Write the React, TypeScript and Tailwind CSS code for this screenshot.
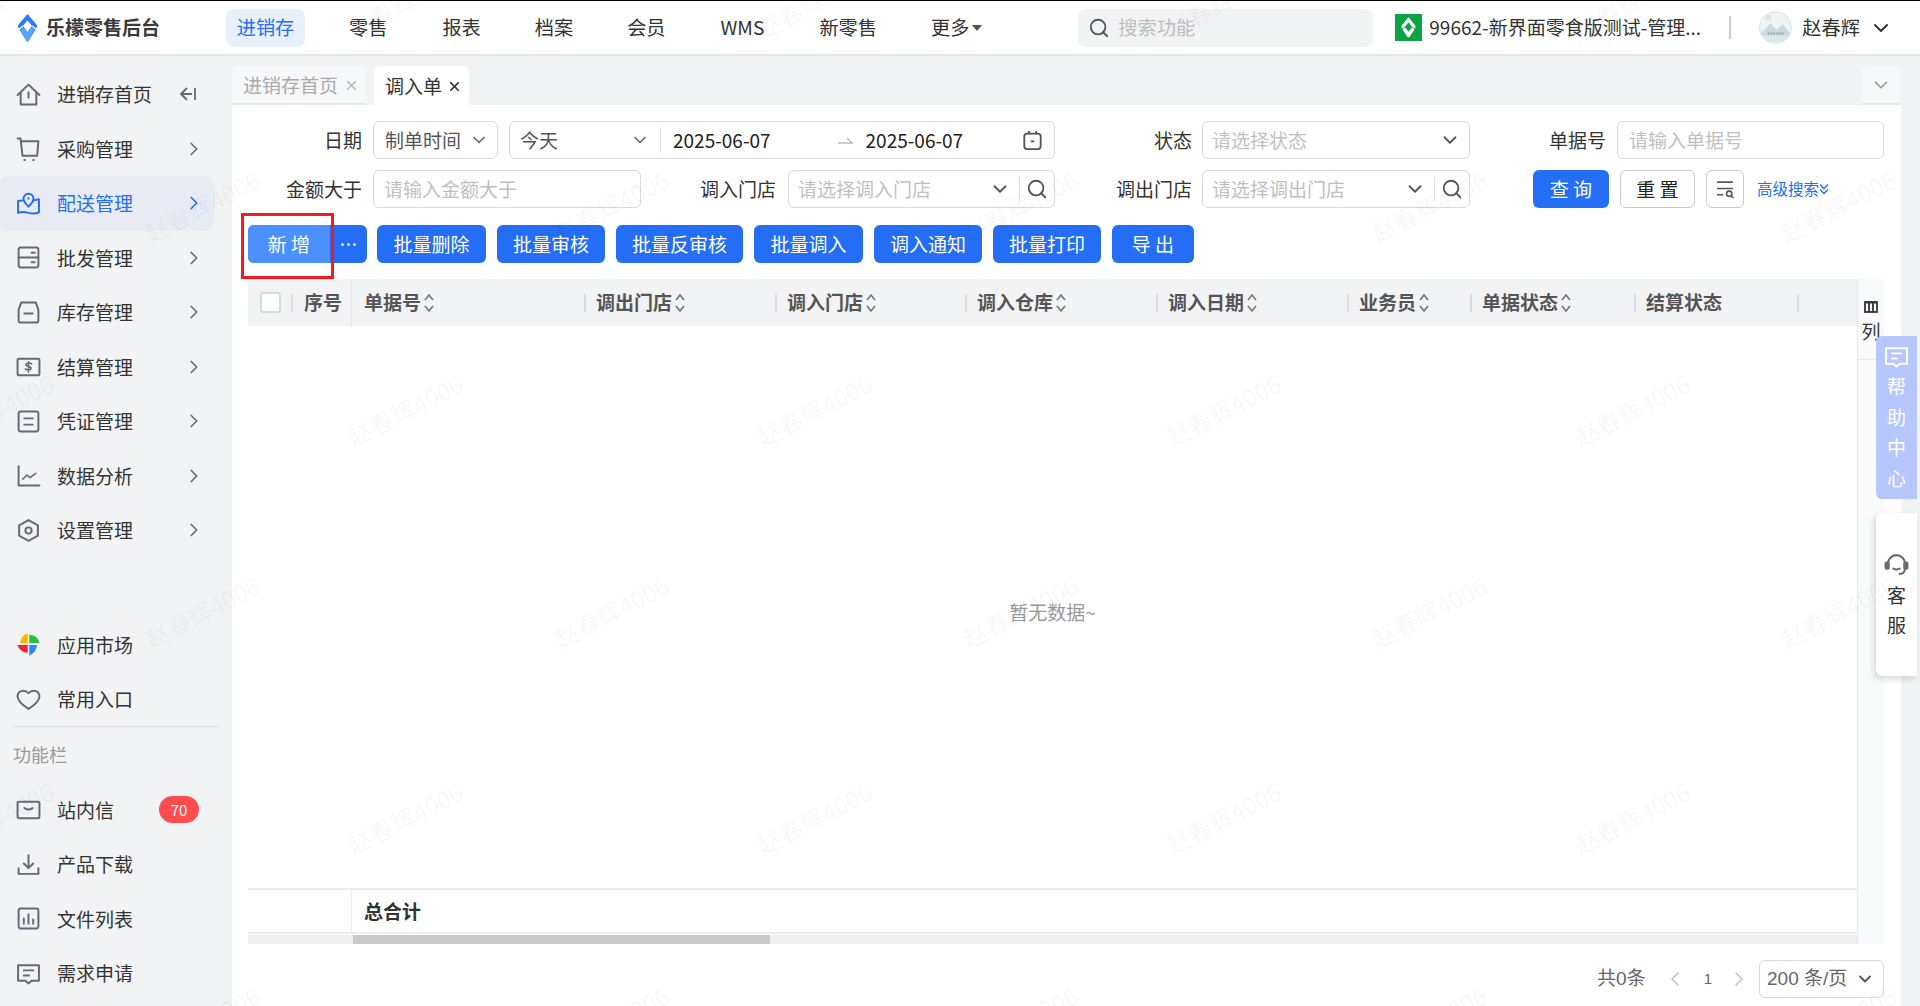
import type { ReactNode } from 'react'
import { ChevronDown, ChevronLeft, ChevronRight, Search, X } from 'lucide-react'

function Ico({ children, className = '' }: { children: ReactNode; className?: string }) {
  return (
    <svg viewBox="0 0 24 24" fill="none" stroke="currentColor" strokeWidth="1.9" strokeLinejoin="round" strokeLinecap="round" className={`h-[25px] w-[25px] shrink-0 ${className}`}>
      {children}
    </svg>
  )
}

const icons: Record<string, ReactNode> = {
  home: <><path d="M1.5 12.5 12 2.5l10.5 10" /><path d="M4.5 10.500V21.500h15V10.500" /><path d="M12 10v5" /></>,
  cart: <><path d="M1.500 2.500h2.800l2 16.500h14l1.200-14H5" /><path d="M8 23h.5M16.500 23h.5" /></>,
  map: <><path d="M7 9 2 9.500V21c3-1.200 6-1 10 0s7 1 10-.5V8l-5 1" /><path d="M12 15c-3-3-4.800-5-4.800-7.500a4.800 4.800 0 0 1 9.600 0C16.800 10 15 12 12 15Z" /><path d="M12 7v.500" /></>,
  server: <><rect x="2.500" y="2.500" width="19" height="19" rx="2" /><path d="M2.500 12h19M15 7.500h3M15 16.500h3" /></>,
  box: <><path d="M5 2.500h14l2.500 7V20a1.500 1.500 0 0 1-1.500 1.500H4A1.500 1.500 0 0 1 2.500 20V9.500Z" /><path d="M8 13h8" /></>,
  money: <><rect x="1.500" y="4.500" width="21" height="16" rx="1" /><path d="M15 9.500c-1-1-5-1.500-5.500.500s5 1.500 5 3.800c-.500 2-4.500 1.700-5.500.500M12 7.500v10" strokeWidth="1.500" /></>,
  doc: <><rect x="2.500" y="2.500" width="19" height="19" rx="2" /><path d="M8 9h8M8 15h8" /></>,
  chart: <><path d="M2.500 3v18.500h20" /><path d="M6.500 15.500l4-4 3 2.500 5.500-4" strokeWidth="1.500" /></>,
  hex: <><path d="M12 2 21 7v10l-9 5-9-5V7Z" /><circle cx="12" cy="12" r="3" /></>,
  heart: <path d="M12 21C6 17 1.500 13.500 1.500 9A5.500 5.500 0 0 1 7 3.500c2 0 3.800 1 5 2.500 1.200-1.500 3-2.500 5-2.500A5.500 5.500 0 0 1 22.500 9c0 4.500-4.500 8-10.500 12Z" />,
  mail: <><rect x="1.500" y="4.500" width="21" height="16" rx="1.500" /><path d="M8 10.500c2.500 2 5.500 2 8 0" /></>,
  download: <><path d="M12 3v12M7.500 11l4.500 4.500 4.500-4.500" /><path d="M2.500 15.500V21h19v-5.500" /></>,
  bars: <><rect x="2.500" y="2.500" width="19" height="19" rx="2" /><path d="M7.500 12v5M12 8v9M16.500 13v4" /></>,
  msg: <><path d="M2 4h20v15h-7l-3 2.500L9 19H2Z" /><path d="M7.500 9h9M7.500 14h5" /></>,
}

const apps = (
  <svg viewBox="0 0 24 24" className="h-[25px] w-[25px] shrink-0">
    <path fill="#ffb400" d="M11.300 1.500v9H4c.3-4.800 3.300-8.300 7.300-9Z" />
    <path fill="#22c43c" d="M12.700 3c4.500-.5 8.500 2.500 9.800 7.500h-9.800Z" />
    <path fill="#2b88ff" d="M12.700 12.500h7.500c-.5 5-3.500 8.500-7.500 10Z" />
    <path fill="#f5222d" d="M1.500 12.500h9.800V20c-4.500-.2-8.500-3-9.800-7.500Z" />
  </svg>
)

function SideRow({ icon, label, arrow = true, active = false, extra }: { icon: ReactNode; label: string; arrow?: boolean; active?: boolean; extra?: ReactNode }) {
  return (
    <div className={`flex h-[54.5px] items-center pl-[16px] pr-[27px] ${active ? 'text-[#246ef6]' : 'text-[#333]'}`}>
      <span className={active ? 'text-[#246ef6]' : 'text-[#666a75]'}>{icon}</span>
      <span className="ml-[16px] text-[19px]">{label}</span>
      <span className="ml-auto flex items-center">
        {extra}
        {arrow && <ChevronRight size={22} strokeWidth={1.8} className={active ? 'text-[#246ef6]' : 'text-[#666a75]'} />}
      </span>
    </div>
  )
}

function Sidebar() {
  return (
    <aside className="flex w-[232px] shrink-0 flex-col bg-[#f2f3f5] pt-[11px]">
      <SideRow
        icon={<Ico>{icons.home}</Ico>}
        label="进销存首页"
        arrow={false}
        extra={
          <svg viewBox="0 0 20 20" fill="none" stroke="#666a75" strokeWidth="1.8" className="mr-[7px] h-[20px] w-[20px]">
            <path d="M9 4 3 10l6 6M3 10h11M17 4v12" />
          </svg>
        }
      />
      <SideRow icon={<Ico>{icons.cart}</Ico>} label="采购管理" />
      <div className="mr-[17px] rounded-r-xl rounded-l-md bg-[#e8ebf4] [&>div]:pr-[10px]">
        <SideRow icon={<Ico>{icons.map}</Ico>} label="配送管理" active />
      </div>
      <SideRow icon={<Ico>{icons.server}</Ico>} label="批发管理" />
      <SideRow icon={<Ico>{icons.box}</Ico>} label="库存管理" />
      <SideRow icon={<Ico>{icons.money}</Ico>} label="结算管理" />
      <SideRow icon={<Ico>{icons.doc}</Ico>} label="凭证管理" />
      <SideRow icon={<Ico>{icons.chart}</Ico>} label="数据分析" />
      <SideRow icon={<Ico>{icons.hex}</Ico>} label="设置管理" />
      <div className="h-[60px]" />
      <SideRow icon={apps} label="应用市场" arrow={false} />
      <SideRow icon={<Ico>{icons.heart}</Ico>} label="常用入口" arrow={false} />
      <div className="mx-[13px] -mt-[1px] h-px bg-[#d9dbe0]" />
      <div className="flex h-[56px] items-center pl-[13px] text-[18px] text-[#999]">功能栏</div>
      <SideRow
        icon={<Ico>{icons.mail}</Ico>}
        label="站内信"
        arrow={false}
        extra={<span className="mr-[6px] flex h-[27px] w-[40px] items-center justify-center rounded-full bg-[#ff4d4f] text-[15px] text-white">70</span>}
      />
      <SideRow icon={<Ico>{icons.download}</Ico>} label="产品下载" arrow={false} />
      <SideRow icon={<Ico>{icons.bars}</Ico>} label="文件列表" arrow={false} />
      <SideRow icon={<Ico>{icons.msg}</Ico>} label="需求申请" arrow={false} />
    </aside>
  )
}

function Header() {
  const nav = [
    ['零售', 'ml-[44px]'],
    ['报表', 'ml-[55px]'],
    ['档案', 'ml-[54px]'],
    ['会员', 'ml-[54px]'],
    ['WMS', 'ml-[55px]'],
    ['新零售', 'ml-[55px]'],
  ]
  return (
    <header className="flex h-[56px] shrink-0 items-center border-t border-b-2 border-t-black border-b-[#e5e6e8] bg-white text-[19.2px] text-[#333]">
      <svg viewBox="0 0 20 28" className="ml-[17px] h-[28px] w-[21px] shrink-0">
        <path fill="#2f7bf6" d="M10 0 19 10.500Q20 12 19 14L11 27Q10 28.500 9 27L1 14Q0 12 1 10.500Z" />
        <path fill="#fff" d="M10 6.500 14.500 12 10 18 5.500 12Z" />
        <path stroke="#fff" strokeWidth="1.300" d="M5.500 12 1 15.500M14.500 12 19 15.500" />
        <path fill="#5aa5ff" d="M3 15.800 6 13.500 10 18.500 14 13.500 17 15.800 11 26.500Q10 27.800 9 26.500Z" />
      </svg>
      <span className="ml-[8px] text-[19px] font-bold text-[#3a3a3a]">乐檬零售后台</span>
      <span className="ml-[66px] flex h-[38px] w-[79px] items-center justify-center rounded-lg bg-[#e8effd] text-[#246ef6]">进销存</span>
      {nav.map(([t, c]) => (
        <span key={t} className={c}>{t}</span>
      ))}
      <span className="ml-[54px]">更多</span>
      <svg viewBox="0 0 12 7" className="ml-[2px] h-[6px] w-[12px]"><path fill="#555" d="M0 0h12L6 7Z" /></svg>
      <div className="ml-[95px] flex h-[38px] w-[295px] items-center rounded-lg bg-[#f2f3f5] pl-[10px] text-[#bfbfbf]">
        <Search size={22} strokeWidth={2} className="text-[#555]" />
        <span className="ml-[8px]">搜索功能</span>
      </div>
      <span className="ml-[22px] flex h-[27px] w-[27px] items-center justify-center bg-[#0aa444]">
        <svg viewBox="0 0 16 22" className="h-[21px] w-[15px]">
          <path fill="#fff" d="M8 0 15 8.500Q16 10 15 12L9 21Q8 22 7 21L1 12Q0 10 1 8.500Z" />
          <path fill="#0aa444" d="M8 5.500 12 10.500 8 15.500 4 10.500Z" />
          <path stroke="#0aa444" strokeWidth="1" d="M4 10.500 1 13M12 10.500 15 13" />
        </svg>
      </span>
      <span className="ml-[7px] w-[272px] whitespace-nowrap text-[19px]">99662-新界面零食版测试-管理...</span>
      <span className="ml-[28px] h-[23px] w-[2px] bg-[#ccc]" />
      <span className="ml-[28px] flex h-[33px] w-[33px] shrink-0 items-end justify-center overflow-hidden rounded-full border border-[#cfeaea] bg-[#eef3f6]">
        <svg viewBox="0 0 33 33" className="h-[33px] w-[33px]">
          <circle cx="9" cy="7" r="3" fill="#dbe3e8" />
          <path fill="#cbd8de" d="M0 25 11 13l7 7 6-6 9 11v8H0Z" />
          <path fill="#dce9ec" d="M0 26h33v7H0Z" />
          <path stroke="#97a6b3" strokeWidth="2" strokeDasharray="2 1" d="M8 24h17" />
        </svg>
      </span>
      <span className="ml-[10px]">赵春辉</span>
      <ChevronDown size={24} strokeWidth={2} className="ml-[9px] text-[#333]" />
    </header>
  )
}

function Tabs() {
  return (
    <div className="flex h-[49px] shrink-0 items-start pt-[10px] text-[19px]">
      <div className="flex h-[39px] w-[134px] items-center rounded-t-md border-b-2 border-[#e5e6e8] bg-[#f7f8f9] pl-[11px] pt-[2px] text-[#aaa]">
        进销存首页
        <X size={15} strokeWidth={2.2} className="ml-[6px] text-[#b5b5b5]" />
      </div>
      <div className="ml-[8px] flex h-[39px] w-[95px] items-center rounded-t-md bg-white pl-[11px] pt-[1px] text-[#333]">
        调入单
        <X size={15} strokeWidth={2.8} className="ml-[5px] text-[#333]" />
      </div>
      <div className="ml-auto mr-[20px] flex h-[39px] w-[38px] items-center justify-center rounded-t-md border-b-2 border-[#e5e6e8] bg-[#f7f8f9]">
        <ChevronDown size={22} strokeWidth={1.8} className="text-[#999]" />
      </div>
    </div>
  )
}

const box = 'flex h-[38px] items-center rounded-md border border-[#d9d9d9] bg-white'

function Label({ w, children }: { w: string; children: ReactNode }) {
  return <span className={`${w} shrink-0 text-right text-[19px] text-[#333]`}>{children}</span>
}

function Select({ w, text, search = false, gap = 'ml-[10px]' }: { w: string; text: string; search?: boolean; gap?: string }) {
  return (
    <div className={`${box} ${w} ${gap} pl-[9px] pr-[6px] text-[#bfbfbf]`}>
      <span className="text-[19px]">{text}</span>
      <ChevronDown size={22} strokeWidth={2} className={`ml-auto text-[#555] ${search ? 'mr-[8px]' : 'mr-[2px]'}`} />
      {search && (
        <>
          <span className="h-[24px] w-px bg-[#ddd]" />
          <Search size={22} strokeWidth={2} className="ml-[6px] text-[#555]" />
        </>
      )}
    </div>
  )
}

function Filters() {
  return (
    <div className="flex flex-col gap-[11px] pt-[16px]">
      <div className="flex items-center">
        <Label w="w-[114px]">日期</Label>
        <div className={`${box} ml-[11px] w-[125px] pl-[11px] pr-[8px] text-[19px] text-[#555]`}>
          制单时间
          <ChevronDown size={20} strokeWidth={2} className="ml-auto text-[#666]" />
        </div>
        <div className={`${box} ml-[11px] w-[546px] pl-[10px] text-[19px] text-[#333]`}>
          <span className="text-[#555]">今天</span>
          <ChevronDown size={20} strokeWidth={2} className="ml-[72px] text-[#666]" />
          <span className="ml-[10px] h-[26px] w-px bg-[#ddd]" />
          <span className="ml-[12px] text-[#222]">2025-06-07</span>
          <svg viewBox="0 0 16 8" className="ml-[67px] h-[8px] w-[16px]"><path d="M0 7h15M9 2l5 5" stroke="#bbb" strokeWidth="1.400" fill="none" /></svg>
          <span className="ml-[12px] text-[#222]">2025-06-07</span>
          <svg viewBox="0 0 20 22" fill="none" stroke="#555" strokeWidth="2" className="ml-[60px] h-[20px] w-[19px]">
            <rect x="1" y="4" width="18" height="17" rx="3" />
            <path d="M6 1v4M14 1v4M8 12.500h4" />
          </svg>
        </div>
        <Label w="w-[137px]">状态</Label>
        <Select w="w-[268px]" text="请选择状态" />
        <Label w="w-[136px]">单据号</Label>
        <div className={`${box} ml-[11px] w-[267px] pl-[11px] text-[19px] text-[#bfbfbf]`}>请输入单据号</div>
      </div>
      <div className="flex items-center">
        <Label w="w-[114px]">金额大于</Label>
        <div className={`${box} ml-[11px] w-[268px] pl-[10px] text-[19px] text-[#bfbfbf]`}>请输入金额大于</div>
        <Label w="w-[135px]">调入门店</Label>
        <Select w="w-[267px]" text="请选择调入门店" search gap="ml-[12px]" />
        <Label w="w-[137px]">调出门店</Label>
        <Select w="w-[268px]" text="请选择调出门店" search />
        <button className="ml-[63px] h-[38px] w-[76px] rounded-md bg-[#246ef6] text-[19px] text-white">查 询</button>
        <button className="ml-[11px] h-[38px] w-[75px] rounded-md border border-[#c9c9c9] bg-white text-[19px] text-[#222]">重 置</button>
        <button className="ml-[11px] flex h-[38px] w-[38px] items-center justify-center rounded-md border border-[#c9c9c9] bg-white">
          <svg viewBox="0 0 18 18" fill="none" stroke="#555" strokeWidth="1.500" className="h-[19px] w-[19px]">
            <path d="M1 2h15M1 8h15M1 14h6" />
            <circle cx="12.500" cy="13" r="2.500" />
            <path d="m14.500 15 2 2" />
          </svg>
        </button>
        <span className="ml-[13px] flex items-center text-[15.500px] text-[#246ef6]">
          高级搜索
          <svg viewBox="0 0 10 12" fill="none" stroke="#246ef6" strokeWidth="1.400" className="h-[12px] w-[10px]"><path d="m1 1.500 4 4 4-4M1 6.500l4 4 4-4" /></svg>
        </span>
      </div>
    </div>
  )
}

function Actions() {
  const items = [
    ['批量删除', 'w-[109px]'],
    ['批量审核', 'w-[108px]'],
    ['批量反审核', 'w-[127px]'],
    ['批量调入', 'w-[109px]'],
    ['调入通知', 'w-[108px]'],
    ['批量打印', 'w-[108px]'],
    ['导 出', 'w-[82px]'],
  ]
  return (
    <div className="mt-[17px] flex h-[38px] gap-[11px] text-[19px] text-white">
      <div className="mr-[-1px] flex w-[119px] overflow-hidden rounded-md bg-[#246ef6]">
        <span className="flex w-[82px] items-center justify-center bg-[#4a90ff]">新 增</span>
        <span className="flex flex-1 items-center justify-center gap-[3px]">
          <i className="h-[3px] w-[3px] rounded-full bg-white/80" />
          <i className="h-[3px] w-[3px] rounded-full bg-white/80" />
          <i className="h-[3px] w-[3px] rounded-full bg-white/80" />
        </span>
      </div>
      {items.map(([t, w]) => (
        <span key={t} className={`${w} flex items-center justify-center rounded-md bg-[#246ef6]`}>{t}</span>
      ))}
    </div>
  )
}

function Sort() {
  return (
    <svg viewBox="0 0 10 20" fill="none" stroke="#777" strokeWidth="1.700" className="ml-[3px] h-[20px] w-[10px]">
      <path d="m1 7 4-5 4 5M1 13l4 5 4-5" />
    </svg>
  )
}

function Table() {
  const cols = [
    ['单据号', 'w-[232px]'],
    ['调出门店', 'w-[191px]'],
    ['调入门店', 'w-[190px]'],
    ['调入仓库', 'w-[191px]'],
    ['调入日期', 'w-[191px]'],
    ['业务员', 'w-[123px]'],
    ['单据状态', 'w-[164px]'],
  ]
  return (
    <div className="mt-[16px] flex h-[665px]">
      <div className="flex w-[1609px] flex-col">
        <div className="flex h-[47px] shrink-0 items-center bg-[#f2f3f5] text-[19px] font-bold text-[#555]">
          <div className="flex h-full w-[104px] items-center border-r border-[#e5e6e8] pl-[12px]">
            <span className="h-[21px] w-[21px] rounded-[3px] border-2 border-[#d9d9d9] bg-white" />
            <span className="ml-[10px] h-[18px] w-[2px] bg-[#ddd]" />
            <span className="ml-[11px]">序号</span>
          </div>
          {cols.map(([t, w]) => (
            <div key={t} className={`${w} flex items-center pl-[12px]`}>
              {t}
              <Sort />
              <span className="ml-auto h-[18px] w-[2px] translate-x-[2px] bg-[#ddd]" />
            </div>
          ))}
          <div className="flex w-[163px] items-center pl-[12px]">
            结算状态
            <span className="ml-auto h-[18px] w-[2px] translate-x-[2px] bg-[#ddd]" />
          </div>
        </div>
        <div className="flex flex-1 items-center justify-center pt-[10px] text-[19px] text-[#999]">暂无数据~</div>
        <div className="flex h-[46px] shrink-0 border-y-2 border-[#ebecee] text-[19px] font-bold text-[#333]">
          <div className="w-[104px] border-r border-[#ebecee]" />
          <div className="flex items-center pl-[12px]">总合计</div>
        </div>
        <div className="mt-px h-[9px] shrink-0 bg-[#efefef] pl-[105px]">
          <div className="h-full w-[417px] bg-[#c9c9c9]" />
        </div>
      </div>
      <div className="w-[27px] border-l border-[#e8e9eb] bg-[#f9fafc]">
        <div className="flex h-[81px] flex-col items-center border-b border-[#e8e9eb] pt-[21px] text-[19px] leading-none text-[#333]">
          <svg viewBox="0 0 14 14" fill="none" stroke="#333" strokeWidth="1.800" className="h-[14px] w-[14px]">
            <rect x="1" y="2" width="12" height="10" />
            <path d="M1 2.500h12M5 2v10M9 2v10" />
          </svg>
          <span className="mt-[7px]">列</span>
        </div>
      </div>
    </div>
  )
}

function Pager() {
  return (
    <div className="mt-[16px] flex items-center justify-end pr-[17px] text-[#666] [font-family:'Liberation_Sans','Noto_Sans_CJK_SC',sans-serif]">
      <span className="text-[19px]">共0条</span>
      <ChevronLeft size={24} strokeWidth={1.500} className="ml-[17px] text-[#c0c0c0]" />
      <span className="ml-[17px] text-[15px]">1</span>
      <ChevronRight size={24} strokeWidth={1.500} className="ml-[15px] text-[#c0c0c0]" />
      <div className={`${box} ml-[8px] h-[33px] w-[125px] pl-[7px] pr-[8px] text-[19px]`}>
        200 条/页
        <ChevronDown size={20} strokeWidth={2.200} className="ml-auto text-[#555]" />
      </div>
    </div>
  )
}

function Floaters() {
  const v = 'flex flex-col items-center gap-[5.6px] text-[19px] leading-[25px]'
  return (
    <>
      <div className="absolute left-[1876px] top-[336px] flex h-[163px] w-[41px] flex-col items-center rounded-l-md bg-[#b5c7fe] pt-[8px] text-white">
        <Ico className="h-[22px] w-[22px]">{icons.msg}</Ico>
        <div className={`${v} mt-[4px]`}><span>帮</span><span>助</span><span>中</span><span>心</span></div>
      </div>
      <div className="absolute left-[1876px] top-[513px] flex h-[163px] w-[41px] flex-col items-center justify-center rounded-l-md bg-white text-[#333] shadow-[-2px_3px_6px_rgba(0,0,0,0.15)]">
        <svg viewBox="0 0 24 24" fill="none" stroke="#666a75" strokeWidth="2" strokeLinecap="round" className="h-[25px] w-[25px]">
          <path d="M4 13v-2a8 8 0 0 1 16 0v5c0 3-2 5-5 5" />
          <rect x="1.500" y="10" width="3" height="6" rx="1" fill="#666a75" />
          <rect x="19.500" y="10" width="3" height="6" rx="1" fill="#666a75" />
          <path d="M9 16c2 1 4 1 6 0" />
        </svg>
        <div className={`${v} mt-[5px]`}><span>客</span><span>服</span></div>
      </div>
    </>
  )
}

function Watermarks() {
  const marks: { x: number; y: number }[] = []
  const rows = [2, 206, 410, 612, 818, 1022]
  rows.forEach((y, i) => {
    for (let k = -1; k < 6; k++) marks.push({ x: (i % 2 ? 202 : 405) + k * 409, y })
  })
  return (
    <div className="pointer-events-none absolute inset-0 overflow-hidden">
      {marks.map(m => (
        <span
          key={`${m.x}-${m.y}`}
          className="absolute -translate-x-1/2 -translate-y-1/2 -rotate-[27deg] whitespace-nowrap text-[24px] text-black/[0.045]"
          style={{ left: m.x, top: m.y }}
        >
          赵春辉4006
        </span>
      ))}
    </div>
  )
}

export default function App() {
  return (
    <div className="relative flex h-[1006px] w-[1920px] flex-col overflow-hidden bg-[#f2f3f5] [font-family:'Noto_Sans_CJK_SC','Noto_Sans',sans-serif]">
      <Header />
      <div className="flex min-h-0 flex-1">
        <Sidebar />
        <main className="flex min-w-0 flex-1 flex-col">
          <Tabs />
          <div className="mr-[19px] flex-1 bg-white pl-[16px]">
            <Filters />
            <Actions />
            <Table />
            <Pager />
          </div>
        </main>
      </div>
      <Floaters />
      <div className="absolute left-[241px] top-[213px] h-[66px] w-[93px] border-[3px] border-[#f5191e]" />
      <Watermarks />
    </div>
  )
}
